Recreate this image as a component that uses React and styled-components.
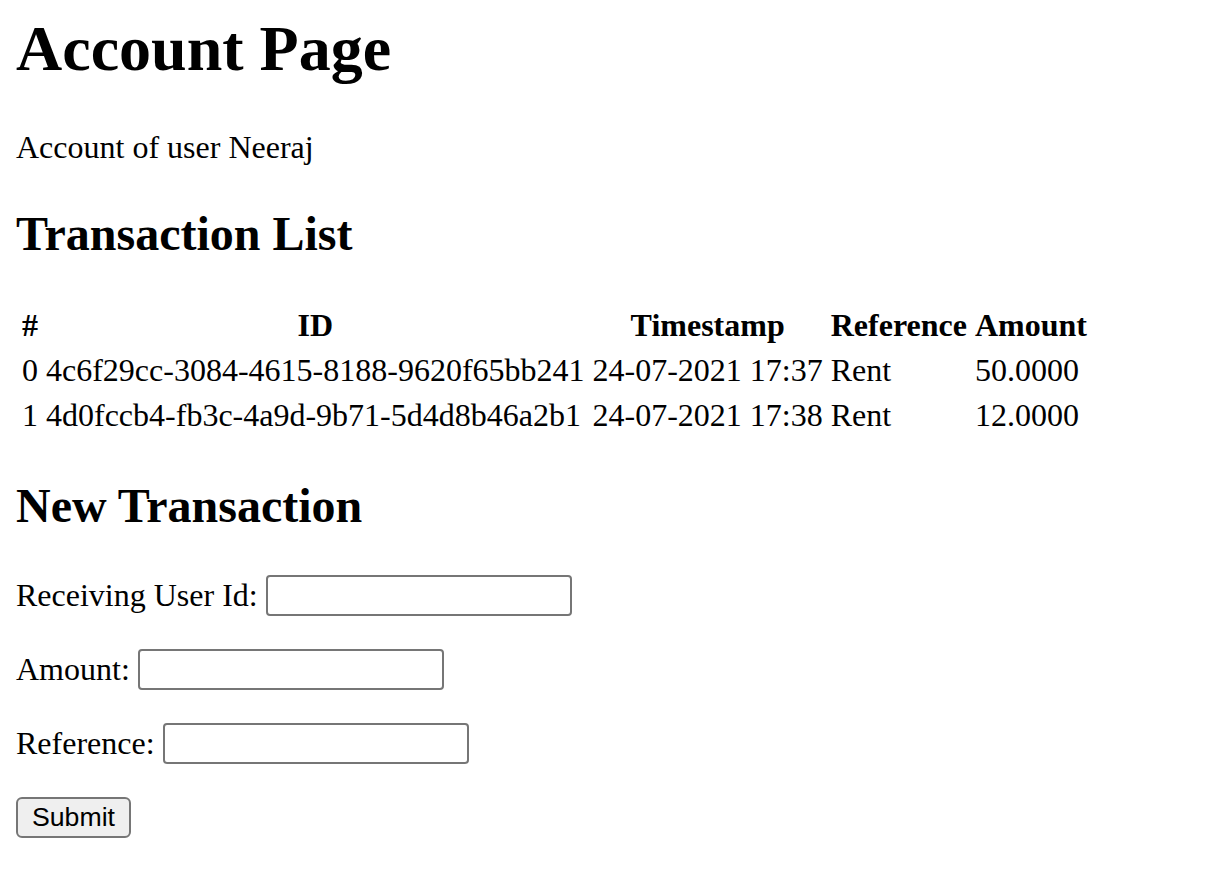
import styled, { createGlobalStyle } from "styled-components";

const GlobalStyle = createGlobalStyle`
  body {
    margin: 0;
    background: #fff;
    color: #000;
    font-family: "Liberation Serif", "Times New Roman", serif;
    font-size: 32px;
  }
`;

const transactions = [
  { id: "4c6f29cc-3084-4615-8188-9620f65bb241", timestamp: "24-07-2021 17:37", reference: "Rent", amount: "50.0000" },
  { id: "4d0fccb4-fb3c-4a9d-9b71-5d4d8b46a2b1", timestamp: "24-07-2021 17:38", reference: "Rent", amount: "12.0000" },
];

const Page = styled.div`
  padding: 12px 16px 16px;
`;

const Title = styled.h1`
  font-size: 64px;
  font-weight: bold;
  margin: 0 0 43px;
`;

const Text = styled.p`
  margin: 0 0 40px;
`;

const SectionTitle = styled.h2`
  font-size: 48px;
  font-weight: bold;
  margin: ${(p) => (p.$first ? "0 0 40px" : "38px 0 42px")};
`;

const Table = styled.table`
  border-collapse: separate;
  border-spacing: 4px;
  font-size: 32px;
`;

const Th = styled.th`
  padding: 2px;
  font-weight: bold;
  text-align: center;
`;

const Td = styled.td`
  padding: 2px;
  text-align: left;
`;

const Form = styled.form`
  display: flex;
  flex-direction: column;
  align-items: flex-start;
  gap: 33px;
`;

const Field = styled.div`
  display: flex;
  align-items: center;
  gap: 8px;
`;

const Input = styled.input`
  box-sizing: border-box;
  width: 306px;
  height: 41px;
  border: 2px solid #767676;
  border-radius: 4px;
  background: #fff;
  padding: 2px 4px;
  font-size: 26px;
`;

const Button = styled.button`
  box-sizing: border-box;
  width: 115px;
  height: 41px;
  border: 2px solid #767676;
  border-radius: 6px;
  background: #efefef;
  color: #000;
  font-family: "Liberation Sans", Arial, sans-serif;
  font-size: 26.67px;
  padding: 0 12px;
`;

export default function App() {
  return (
    <Page>
      <GlobalStyle />
      <Title>Account Page</Title>
      <Text>Account of user Neeraj</Text>
      <SectionTitle $first>Transaction List</SectionTitle>
      <Table>
        <thead>
          <tr>
            <Th>#</Th>
            <Th>ID</Th>
            <Th>Timestamp</Th>
            <Th>Reference</Th>
            <Th>Amount</Th>
          </tr>
        </thead>
        <tbody>
          {transactions.map((t, i) => (
            <tr key={t.id}>
              <Td>{i}</Td>
              <Td>{t.id}</Td>
              <Td>{t.timestamp}</Td>
              <Td>{t.reference}</Td>
              <Td>{t.amount}</Td>
            </tr>
          ))}
        </tbody>
      </Table>
      <SectionTitle>New Transaction</SectionTitle>
      <Form onSubmit={(e) => e.preventDefault()}>
        <Field>
          <label htmlFor="receiver">Receiving User Id:</label>
          <Input id="receiver" type="text" />
        </Field>
        <Field>
          <label htmlFor="amount">Amount:</label>
          <Input id="amount" type="text" />
        </Field>
        <Field>
          <label htmlFor="reference">Reference:</label>
          <Input id="reference" type="text" />
        </Field>
        <Button type="submit">Submit</Button>
      </Form>
    </Page>
  );
}
